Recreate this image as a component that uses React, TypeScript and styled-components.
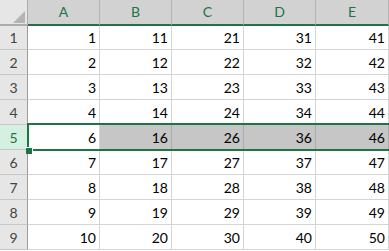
import { Fragment } from "react";
import styled, { createGlobalStyle } from "styled-components";

const GlobalStyle = createGlobalStyle`
  html, body {
    margin: 0;
    padding: 0;
    background: #ffffff;
    overflow: hidden;
  }
`;

const Sheet = styled.div`
  position: relative;
  display: grid;
  grid-template-columns: 28px repeat(4, 72px) 73px;
  grid-template-rows: 26px 24px repeat(8, 25px);
  font-family: Lato, "Open Sans", sans-serif;
  font-size: 14px;
  width: 389px;
`;

const Corner = styled.div`
  position: relative;
  background: #e6e6e6;
  border-right: 1px solid #ababab;
  border-bottom: 2px solid #ababab;
  box-sizing: border-box;
  &::after {
    content: "";
    position: absolute;
    right: 2px;
    bottom: 1px;
    width: 0;
    height: 0;
    border-left: 12px solid transparent;
    border-bottom: 12px solid #b4b4b4;
  }
`;

const ColHead = styled.div`
  display: flex;
  align-items: center;
  justify-content: center;
  background: #d2d2d2;
  color: #217346;
  border-right: 1px solid #b4b4b4;
  border-bottom: 2px solid #217346;
  box-sizing: border-box;
  padding-bottom: 1px;
`;

const RowHead = styled.div<{ $active?: boolean }>`
  display: flex;
  align-items: center;
  justify-content: center;
  background: ${(p) => (p.$active ? "#d3f0e0" : "#e6e6e6")};
  color: ${(p) => (p.$active ? "#217346" : "#444444")};
  border-right: 1px solid #9c9c9c;
  border-bottom: 1px solid #c6c6c6;
  box-sizing: border-box;
`;

const Cell = styled.div<{ $selected?: boolean }>`
  display: flex;
  align-items: center;
  justify-content: flex-end;
  padding-right: 3px;
  color: #000000;
  background: ${(p) => (p.$selected ? "#c6c6c6" : "#ffffff")};
  border-right: 1px solid ${(p) => (p.$selected ? "#ababab" : "#d4d4d4")};
  border-bottom: 1px solid #d4d4d4;
  box-sizing: border-box;
`;

const Selection = styled.div`
  position: absolute;
  left: 27px;
  top: 123px;
  width: 362px;
  height: 28px;
  border: 2px solid #217346;
  border-right: none;
  box-sizing: border-box;
  pointer-events: none;
`;

const FillHandle = styled.div`
  position: absolute;
  left: 26px;
  top: 147px;
  width: 6px;
  height: 6px;
  background: #217346;
  border-right: 1px solid #ffffff;
  border-top: 1px solid #ffffff;
`;

const columns = ["A", "B", "C", "D", "E"];

const rows = [
  [1, 11, 21, 31, 41],
  [2, 12, 22, 32, 42],
  [3, 13, 23, 33, 43],
  [4, 14, 24, 34, 44],
  [6, 16, 26, 36, 46],
  [7, 17, 27, 37, 47],
  [8, 18, 28, 38, 48],
  [9, 19, 29, 39, 49],
  [10, 20, 30, 40, 50],
];

const activeRow = 4;

function App() {
  return (
    <>
      <GlobalStyle />
      <Sheet>
        <Corner />
        {columns.map((c) => (
          <ColHead key={c}>{c}</ColHead>
        ))}
        {rows.map((row, i) => (
          <Fragment key={i}>
            <RowHead $active={i === activeRow}>{i + 1}</RowHead>
            {row.map((v, j) => (
              <Cell key={j} $selected={i === activeRow && j > 0}>
                {v}
              </Cell>
            ))}
          </Fragment>
        ))}
        <Selection />
        <FillHandle />
      </Sheet>
    </>
  );
}

export default App;
